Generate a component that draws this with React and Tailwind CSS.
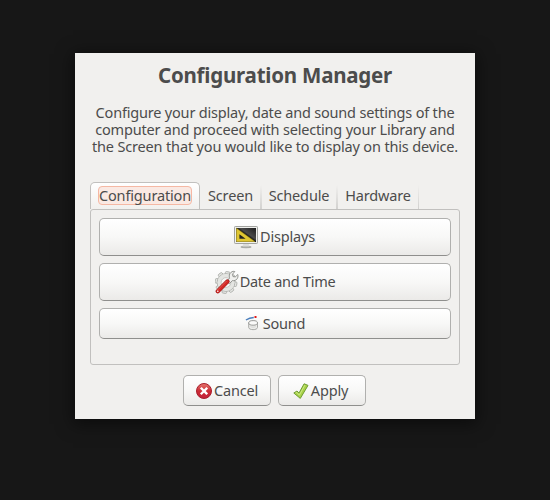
const btn =
  "flex items-center justify-center rounded-[5px] border border-[#b0b0ae] border-b-[#8f8f8d] bg-linear-to-b from-white via-[#f8f8f7] to-[#ebeae8] text-[#4c4c4c] tracking-[-0.18px]";

function DisplayIcon() {
  return (
    <svg width="24" height="24" viewBox="0 0 24 24" className="mt-[2px] shrink-0">
      <defs>
        <linearGradient id="scr" x1="0" y1="1" x2="1" y2="0">
          <stop offset="0" stopColor="#333" />
          <stop offset=".5" stopColor="#161616" />
          <stop offset=".6" stopColor="#4a4a4a" />
          <stop offset="1" stopColor="#1c1c1c" />
        </linearGradient>
      </defs>
      <ellipse cx="12" cy="21" rx="5.5" ry="1.2" fill="#a9aba7" />
      <path d="M9.5 17h5l1 3.5h-7z" fill="#dcddda" />
      <rect x=".5" y=".5" width="23" height="17" rx=".8" fill="#eff0ed" stroke="#a2a3a0" />
      <rect x="2" y="2" width="20" height="14" fill="url(#scr)" />
      <path d="M2.3 2.1 L21.2 15.8 H2.3Z M5.4 8.3V12.7H11.6Z" fill="#dfc632" fillRule="evenodd" />
      <path d="M2.3 2.1L21.2 15.8" stroke="#8f7a12" strokeWidth=".5" />
    </svg>
  );
}

const teeth = [0, 45, 90, 135, 180, 225, 270, 315];

function ToolsIcon() {
  return (
    <svg width="24" height="24" viewBox="0 0 24 24" className="shrink-0">
      <g fill="#e4e5e2" stroke="#a9aba7" strokeWidth=".8">
        {teeth.map((a) => (
          <rect key={a} x="8.7" y="1.6" width="4.6" height="5" rx="1" transform={`rotate(${a + 10} 11 12.5)`} />
        ))}
        <circle cx="11" cy="12.5" r="8.9" />
      </g>
      <circle cx="11" cy="12.5" r="8.4" fill="#e4e5e2" />
      <circle cx="11" cy="12.5" r="4.9" fill="#f7f7f6" stroke="#bcbeba" strokeWidth=".8" />
      <path d="M11.6 11.4l3-3.2c-1-2.9.2-6 3.5-6.9l1.7.2-2.3 2.7.5 2.4 2.3.3 2.5-2.4c1 3.7-1.7 6.7-5.4 6.1l-3.1 3.1z" fill="#f0f0ee" stroke="#80827e" strokeWidth=".8" />
      <path d="M2.8 21.2l9.6-9.6" stroke="#a31a18" strokeWidth="4.3" strokeLinecap="round" />
      <path d="M2.8 21.2l9.6-9.6" stroke="#d42a27" strokeWidth="3" strokeLinecap="round" />
      <path d="M2.6 20l8.8-8.9" stroke="#ee6e68" strokeWidth=".7" strokeLinecap="round" />
      <circle cx="2.8" cy="21.2" r=".8" fill="#fff" />
    </svg>
  );
}

function SoundIcon() {
  return (
    <svg width="16" height="16" viewBox="0 0 16 16" className="shrink-0">
      <path d="M3.7 6.8v4.6c0 3 8.8 3 8.8 0V6.8z" fill="#ededeb" stroke="#a0a29e" strokeWidth=".9" />
      <ellipse cx="8.1" cy="6.9" rx="4.4" ry="2.3" fill="#fafaf9" stroke="#8e908c" strokeWidth=".9" />
      <path d="M5.5 10.6c1.5.8 3.7.8 5.2 0" stroke="#cfd0cd" strokeWidth=".8" fill="none" />
      <path d="M.9 4C3.5 2.3 6 1.6 8.8 1.5" stroke="#4b7fbd" strokeWidth="1.4" fill="none" />
      <rect x="9.5" y="0" width="2" height="2" fill="#e01818" />
    </svg>
  );
}

function CancelIcon() {
  return (
    <svg width="16" height="16" viewBox="0 0 16 16" className="shrink-0">
      <defs>
        <linearGradient id="red" x1="0" y1="0" x2="0" y2="1">
          <stop offset="0" stopColor="#e57870" />
          <stop offset=".5" stopColor="#cc2c35" />
          <stop offset="1" stopColor="#c3203a" />
        </linearGradient>
      </defs>
      <circle cx="8" cy="8" r="7.5" fill="url(#red)" stroke="#a91e2c" />
      <path d="M5.6 5.6l4.8 4.8M10.4 5.6l-4.8 4.8" stroke="#fff" strokeWidth="2.3" strokeLinecap="square" />
    </svg>
  );
}

function ApplyIcon() {
  return (
    <svg width="16" height="16" viewBox="0 0 16 16" className="shrink-0">
      <path d="M.8 10l3.2-2 2 2L11.1.8l3.9 1.6L7.3 15.4z" fill="#a9d348" stroke="#6f9c35" strokeLinejoin="round" />
      <path d="M2.6 10l1-.7 2.7 2.9L11.9 2.1" stroke="#cfea8c" strokeWidth=".9" fill="none" />
    </svg>
  );
}

function Separator({ className }) {
  return <div className={"h-[24px] self-end bg-linear-to-b from-[#f1f0ee] to-[#d2d1cf] " + className} />;
}

export default function App() {
  return (
    <main className="flex h-[500px] w-[550px] justify-center bg-[#171717] pt-[53px] font-['Noto_Sans','Open_Sans',sans-serif] text-[14.5px] leading-[17px] text-[#4c4c4c]">
      <section className="flex h-[366px] w-[400px] flex-col items-center bg-[#f1f0ee] shadow-[0_3px_16px_2px_rgba(0,0,0,0.5)]">
        <h1 className="mt-[8px] h-[28px] text-[20.5px] leading-[28px] font-bold tracking-[-0.22px] whitespace-nowrap">Configuration Manager</h1>
        <p className="mt-[15px] text-center tracking-[-0.19px] whitespace-nowrap">
          Configure your display, date and sound settings of the<br />
          computer and proceed with selecting your Library and<br />
          <span className="tracking-[-0.16px]">the Screen that you would like to display on this device.</span>
        </p>
        <nav className="mt-[27px] flex h-[27px] w-[370px] items-end tracking-[-0.15px] whitespace-nowrap">
          <div className="flex h-[27px] w-[110px] items-start justify-center rounded-t-[5px] border border-b-0 border-[#c1c0be] bg-linear-to-b from-white to-[#f1f0ee] pt-[3px]">
            <span className="flex h-[19px] w-[94px] items-center justify-center rounded-[4px] border border-[#f5b8a4] bg-[#fae9e3]">
              <span>Configuration</span>
            </span>
          </div>
          <div className="flex h-[27px] w-[60px] items-center justify-center pl-[1px]"><span>Screen</span></div>
          <Separator className="w-[2px]" />
          <div className="flex h-[27px] w-[74px] items-center justify-center"><span>Schedule</span></div>
          <Separator className="w-[2px]" />
          <div className="flex h-[27px] w-[80px] items-center justify-center"><span>Hardware</span></div>
          <Separator className="w-px" />
        </nav>
        <div className="flex h-[156px] w-[370px] flex-col rounded-[3px] border border-[#c1c0be] px-[8px] pt-[8px]">
          <button className={btn + " h-[38px] w-full pr-[1px]"}><DisplayIcon /><span className="mb-[2px] ml-[2px]">Displays</span></button>
          <button className={btn + " mt-[7px] h-[38px] w-full"}><ToolsIcon /><span className="mb-[2px] ml-[1px] tracking-[-0.27px]">Date and Time</span></button>
          <button className={btn + " mt-[7px] h-[31px] w-full"}><SoundIcon /><span className="ml-[2px]">Sound</span></button>
        </div>
        <div className="mt-[10px] mr-[1px] flex gap-[7px] pr-[1px]">
          <button className={btn + " h-[31px] w-[88px] pl-[1px]"}><CancelIcon /><span className="ml-[2px]">Cancel</span></button>
          <button className={btn + " h-[31px] w-[88px] pr-[2px]"}><ApplyIcon /><span className="ml-[2px]">Apply</span></button>
        </div>
      </section>
    </main>
  );
}
